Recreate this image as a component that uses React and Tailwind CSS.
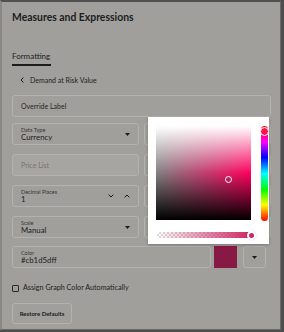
import React from "react";

const Caret = () => (
  <svg width="5" height="3" viewBox="0 0 5 3" className="shrink-0">
    <path d="M0 0h5L2.5 3z" fill="#1c1c1c" />
  </svg>
);

const Chevron = ({ up }) => (
  <svg width="6" height="4" viewBox="0 0 6 4" className="shrink-0">
    <path
      d={up ? "M0.6 3.4L3 1l2.4 2.4" : "M0.6 0.6L3 3l2.4-2.4"}
      fill="none"
      stroke="#1c1c1c"
      strokeWidth="1"
    />
  </svg>
);

const Field = ({ label, value, right, disabled, className = "" }) => (
  <div
    className={`flex h-[22px] items-center rounded-[3px] border border-[#b4b2af] pl-2 pr-2 ${
      disabled ? "bg-[#a7a5a2]" : ""
    } ${className}`}
  >
    <div className="flex min-w-0 flex-1 flex-col">
      {label && (
        <span className="text-[5.5px] leading-[6px] text-[#353535]">{label}</span>
      )}
      {value && (
        <span className="text-[7.8px] leading-[9px] text-[#1c1c1c]">{value}</span>
      )}
    </div>
    {right}
  </div>
);

const ColorPicker = () => (
  <div className="absolute left-[148px] top-[117px] z-10 h-[127px] w-[121px] bg-white pl-[8px] pt-[9px] shadow-[0_1px_3px_rgba(0,0,0,0.25)]">
    <div className="flex items-start gap-[10px]">
      {/* saturation / lightness square */}
      <div className="relative h-[94px] w-[95px] bg-[linear-gradient(to_bottom,#ffffff,#ff005e_50%,#000000)]">
        <div className="absolute inset-0 bg-[linear-gradient(to_bottom,#ffffff,#808080_50%,#000000)] [mask-image:linear-gradient(to_right,black,transparent)]" />
        <div className="absolute left-[69px] top-[50px] h-[7px] w-[7px] rounded-full border border-white" />
      </div>
      {/* hue bar */}
      <div className="relative h-[95px] w-[7px] rounded-full bg-[linear-gradient(to_bottom,#ff0000,#ff00ff_17%,#0000ff_33%,#00ffff_50%,#00ff00_67%,#ffff00_83%,#ff0000)]">
        <div className="absolute left-[-1px] top-[1px] h-[9px] w-[9px] rounded-full border-[1.5px] border-white bg-[#ff1048]" />
      </div>
    </div>
    {/* alpha bar */}
    <div className="relative ml-[1px] mt-[11px] h-[6px] w-[98px] rounded-full bg-[repeating-conic-gradient(#dcdcdc_0%_25%,#ffffff_0%_50%)] bg-[length:4px_4px]">
      <div className="absolute inset-0 rounded-full bg-[linear-gradient(to_right,rgba(203,29,93,0),#cb1d5d)]" />
      <div className="absolute left-[90px] top-[-1.5px] h-[9px] w-[9px] rounded-full border-2 border-white shadow-[0_0_1px_rgba(0,0,0,0.4)]" />
    </div>
  </div>
);

export default function App() {
  return (
    <div className="relative h-[332px] w-[284px] overflow-hidden bg-[#4e4e4e] font-['Lato',sans-serif]">
      <div className="flex h-[330px] w-[281px] flex-col border-t-2 border-b border-l-2 border-r border-t-[#505050] border-b-[#6a6a6a] border-l-[#8a8885] border-r-[#6a6a6a] bg-[#a19f9c] pl-[10px] pr-[9px]">
        {/* Title */}
        <div className="flex h-[32px] items-center">
          <h1 className="text-[10.4px] font-bold text-[#1c1c1c]">Measures and Expressions</h1>
        </div>

        {/* Tabs */}
        <div className="mt-[17px] flex">
          <div className="border-b-2 border-[#1c1c1c] pb-[3px] pr-[1px] text-[8px] leading-[10px] text-[#1c1c1c]">
            Formatting
          </div>
        </div>

        {/* Back link */}
        <div className="mt-[8px] flex h-[12px] items-center gap-[6px] pl-[8px] text-[7px] text-[#1c1c1c]">
          <svg width="4" height="6" viewBox="0 0 4 6">
            <path d="M3.4 0.5L1 3l2.4 2.5" fill="none" stroke="#1c1c1c" strokeWidth="1" />
          </svg>
          <span>Demand at Risk Value</span>
        </div>

        {/* Override label */}
        <div className="mt-[9px] flex h-[22px] items-center rounded-[3px] border border-[#b4b2af] px-2 text-[7px] text-[#262626]">
          Override Label
        </div>

        <div className="mt-[6px] grid grid-cols-2 gap-[5px]">
          <Field label="Data Type" value="Currency" right={<Caret />} />
          <Field />
        </div>

        <div className="mt-[9px] grid grid-cols-2 gap-[5px]">
          <div className="flex h-[22px] items-center rounded-[3px] border border-[#b4b2af] bg-[#a7a5a2] px-2 text-[7px] text-[#767471]">
            Price List
          </div>
          <Field />
        </div>

        <div className="mt-[9px] grid grid-cols-2 gap-[5px]">
          <Field
            label="Decimal Places"
            value="1"
            right={
              <div className="flex items-center gap-[10px]">
                <Chevron />
                <Chevron up />
              </div>
            }
          />
          <Field />
        </div>

        <div className="mt-[9px] grid grid-cols-2 gap-[5px]">
          <Field label="Scale" value="Manual" right={<Caret />} />
          <Field />
        </div>

        {/* Color */}
        <div className="mt-[8px] flex items-center">
          <Field label="Color" value="#cb1d5dff" className="w-[199px]" />
          <div className="ml-[3px] h-[22px] w-[23px] bg-[#861a44]" />
          <div className="ml-[6px] flex h-[22px] w-[23px] items-center justify-center rounded-[3px] border border-[#b4b2af]">
            <Caret />
          </div>
        </div>

        {/* Checkbox */}
        <label className="mt-[15px] flex h-[10px] items-center gap-[4px] text-[7.2px] text-[#1c1c1c]">
          <span className="h-[7px] w-[7px] rounded-[1px] border border-[#2a2a2a]" />
          Assign Graph Color Automatically
        </label>

        <div className="mt-[10px] flex">
          <button className="flex h-[21px] w-[60px] items-center justify-center rounded-[3px] border border-[#b4b2af] text-[6px] font-bold text-[#1c1c1c]">
            Restore Defaults
          </button>
        </div>
      </div>

      <ColorPicker />
    </div>
  );
}
